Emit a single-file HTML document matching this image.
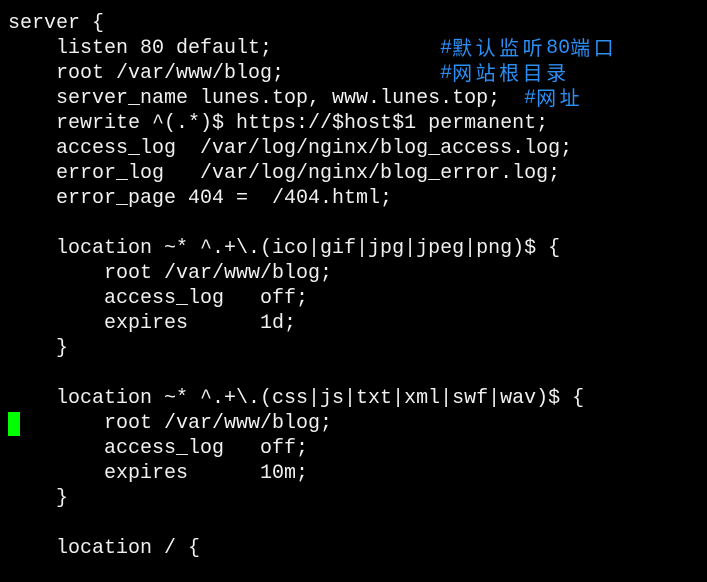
<!DOCTYPE html>
<html><head><meta charset="utf-8"><style>
html,body{margin:0;padding:0;background:#000;width:707px;height:582px;overflow:hidden}
#t{position:absolute;left:8px;top:11px;font-family:"Liberation Mono","Noto Sans CJK SC",monospace;font-size:20px;color:#f0f0f0}
#t div{white-space:pre;height:25px;line-height:25px;overflow:visible}
.c{color:#2b8ff5}
.z{letter-spacing:3.5px;font-family:"Noto Sans CJK SC",sans-serif;font-size:20px;line-height:20px;display:inline-block;height:20px;vertical-align:-2px}
#cur{position:absolute;left:8px;top:412px;width:12px;height:24px;background:#0f0}
</style></head><body>
<div id="t">
<div>server {</div>
<div>    listen 80 default;              <span class="c">#<span class="z">默认监听</span>80<span class="z">端口</span></span></div>
<div>    root /var/www/blog;             <span class="c">#<span class="z">网站根目录</span></span></div>
<div>    server_name lunes.top, www.lunes.top;  <span class="c">#<span class="z">网址</span></span></div>
<div>    rewrite ^(.*)$ https://$host$1 permanent;</div>
<div>    access_log  /var/log/nginx/blog_access.log;</div>
<div>    error_log   /var/log/nginx/blog_error.log;</div>
<div>    error_page 404 =  /404.html;</div>
<div> </div>
<div>    location ~* ^.+\.(ico|gif|jpg|jpeg|png)$ {</div>
<div>        root /var/www/blog;</div>
<div>        access_log   off;</div>
<div>        expires      1d;</div>
<div>    }</div>
<div> </div>
<div>    location ~* ^.+\.(css|js|txt|xml|swf|wav)$ {</div>
<div>        root /var/www/blog;</div>
<div>        access_log   off;</div>
<div>        expires      10m;</div>
<div>    }</div>
<div> </div>
<div>    location / {</div>
</div>
<div id="cur"></div>
</body></html>
